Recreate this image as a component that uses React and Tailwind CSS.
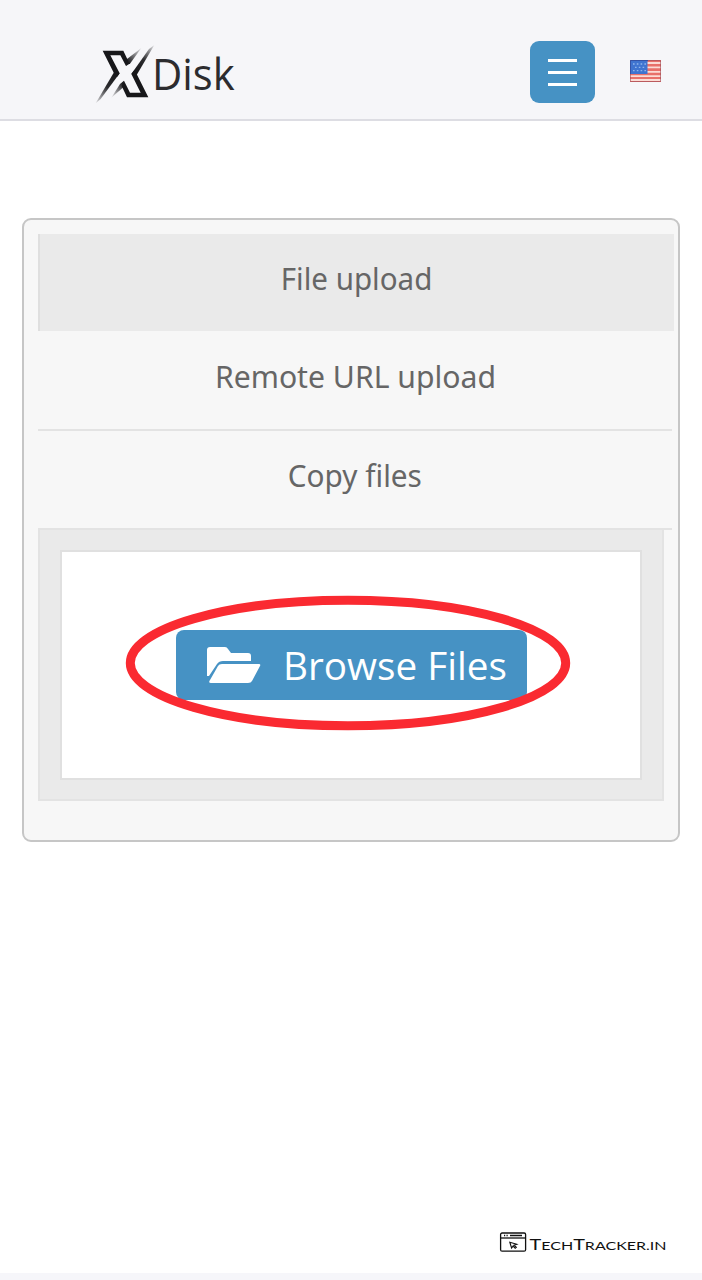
import React from "react";

function XDiskLogo() {
  return (
    <svg className="block h-[64px] w-[144px]" viewBox="45 39 432 192" role="img" aria-label="XDisk">
      <defs>
        <linearGradient id="fadeUp" gradientUnits="userSpaceOnUse" x1="165" y1="125" x2="222" y2="46">
          <stop offset="0" stopColor="#17171a" />
          <stop offset="0.45" stopColor="#2b2b2e" />
          <stop offset="1" stopColor="#17171a" stopOpacity="0.1" />
        </linearGradient>
        <linearGradient id="fadeDown" gradientUnits="userSpaceOnUse" x1="108" y1="130" x2="48" y2="220">
          <stop offset="0" stopColor="#17171a" />
          <stop offset="0.45" stopColor="#2b2b2e" />
          <stop offset="1" stopColor="#17171a" stopOpacity="0.1" />
        </linearGradient>
        <linearGradient id="shortUp" gradientUnits="userSpaceOnUse" x1="142" y1="96" x2="182" y2="54">
          <stop offset="0" stopColor="#17171a" />
          <stop offset="1" stopColor="#17171a" stopOpacity="0.1" />
        </linearGradient>
        <linearGradient id="shortDown" gradientUnits="userSpaceOnUse" x1="130" y1="160" x2="96" y2="200">
          <stop offset="0" stopColor="#17171a" />
          <stop offset="1" stopColor="#17171a" stopOpacity="0.1" />
        </linearGradient>
      </defs>
      <path d="M68 62H130L145 94L138 108L121 76H91L119 130L112 140L102 130Z" fill="#17171a" />
      <path d="M138 108L140 88L184 54L151 100Z" fill="url(#shortUp)" />
      <path d="M119 130L102 127L47 220L62 207Z" fill="url(#fadeDown)" />
      <path d="M205 202H141L125 168L132 152L150 188H182L154 132L161 122L170 132Z" fill="#17171a" />
      <path d="M132 152L130 172L94 203L120 162Z" fill="url(#shortDown)" />
      <path d="M154 132L170 135L223 45L207 57Z" fill="url(#fadeUp)" />
      <text x="216" y="181" textLength="248" lengthAdjust="spacingAndGlyphs" fontSize="131" fill="#2c2c2f" className="font-['Open_Sans','Noto_Sans',sans-serif]">Disk</text>
    </svg>
  );
}

function UsFlag() {
  return (
    <svg className="block h-[22px] w-[31px]" viewBox="0 0 31 22">
      <rect width="31" height="22" fill="#e8716a" />
      <path d="M0 3H31M0 7.4H31M0 11.8H31M0 16.2H31M0 20H31" stroke="#fbdcd5" strokeWidth="1.8" />
      <rect width="17.5" height="14" fill="#3f74d0" />
      <path d="M3 4H16M5 7.3H16M3 10.6H16" stroke="#8fb4ea" strokeWidth="1.3" strokeDasharray="1.6 2.2" />
      <path d="M.5 .5H30.5V21.5H.5Z" fill="none" stroke="#9c4b56" strokeOpacity=".6" />
      <path d="M.5 14V.5H18" fill="none" stroke="#3553a5" />
    </svg>
  );
}

function FolderIcon() {
  return (
    <svg className="block h-[38px] w-[55px]" viewBox="0 0 55 38" fill="#fff">
      <path d="M1 30V4Q1 1 4 1H19Q21 1 22 3L25 7H42Q45 7 45 10V15H17Q13 15 11 18L3 30Z" />
      <path d="M16 18H53Q55 18 54 20L46 35Q45 37 42 37H5Q2 37 4 34L12 20Q13 18 16 18Z" />
    </svg>
  );
}

function Watermark() {
  return (
    <svg className="block h-[24px] w-[170px]" viewBox="0 0 170 24" role="img" aria-label="TechTracker.in">
      <g fill="none" stroke="#111" strokeWidth="1.3">
        <rect x="1.6" y="3" width="25" height="18.2" rx="1.5" />
        <path d="M1.6 8H26.6" />
        <path d="M5 5.5H6.2M7.5 5.5H8.7M11 5.5H23" />
        <path d="M10.8 12.2L17.8 14.3L15 15.2L17.3 17.3L16.2 18.2L14 16.1L12.6 18Z" strokeWidth="1.1" />
      </g>
      <text x="30.5" y="19.5" textLength="137" lengthAdjust="spacingAndGlyphs" fill="#111" fontSize="11.6" className="font-[Lato,sans-serif]">
        <tspan fontSize="14.4">T</tspan>ECH<tspan fontSize="14.4">T</tspan>RACKER.IN
      </text>
    </svg>
  );
}

export default function App() {
  return (
    <div className="flex h-[1280px] w-[702px] flex-col overflow-hidden bg-white font-['Noto_Sans',sans-serif]">
      <header className="flex h-[121px] shrink-0 items-start border-b-2 border-[#dddde3] bg-[#f6f6f9] pl-[95px]">
        <div className="mt-[43px]"><XDiskLogo /></div>
        <button className="mt-[41px] ml-[291px] flex h-[62px] w-[65px] flex-col items-center justify-center gap-[9px] rounded-[9px] bg-[#4692c4]" aria-label="Menu">
          <span className="h-[3px] w-[29px] bg-white" />
          <span className="h-[3px] w-[29px] bg-white" />
          <span className="h-[3px] w-[29px] bg-white" />
        </button>
        <div className="mt-[60px] ml-[35px]"><UsFlag /></div>
      </header>

      <main className="flex-1 pt-[97px] pl-[22px]">
        <section className="h-[624px] w-[658px] rounded-[9px] border-2 border-[#c6c6c6] bg-[#f7f7f7] pt-[14px] pl-[14px]">
          <nav className="text-center text-[31px] leading-[40px] text-[#666]">
            <div className="flex h-[97px] w-[636px] justify-center border-l-2 border-[#dfdfdf] bg-[#eaeaea] pt-[24px]">
              <span className="scale-x-[0.953]">File upload</span>
            </div>
            <div className="flex h-[100px] w-[634px] justify-center border-b-2 border-[#e3e3e3] pt-[25px]">
              <span className="scale-x-[0.973]">Remote URL upload</span>
            </div>
            <div className="flex h-[99px] w-[634px] justify-center border-b-2 border-[#e3e3e3] pt-[24px]">
              <span className="scale-x-[0.96]">Copy files</span>
            </div>
          </nav>
          <div className="h-[271px] w-[626px] border-x-2 border-b-2 border-[#e3e3e3] bg-[#eaeaea] pt-[20px] pl-[20px]">
            <div className="relative flex h-[230px] w-[582px] justify-center border-2 border-[#e0e0e0] bg-white pt-[78px]">
              <button className="flex h-[70px] w-[351px] items-center rounded-[8px] bg-[#4692c4] pl-[30px] text-[39px] leading-[54px] text-white">
                <FolderIcon />
                <span className="ml-[22px] origin-left scale-x-[0.992] whitespace-nowrap font-['Open_Sans','Noto_Sans',sans-serif]">Browse Files</span>
              </button>
              <svg className="absolute top-[43px] left-[63px] h-[138px] w-[448px]" viewBox="0 0 448 138" fill="none">
                <ellipse cx="223" cy="68" rx="217.7" ry="62.8" stroke="#fa2a31" strokeWidth="9" />
              </svg>
            </div>
          </div>
        </section>
      </main>

      <div className="flex h-[43px] shrink-0 justify-end pr-[33px]"><Watermark /></div>
      <footer className="h-[7px] shrink-0 bg-[#f6f6fa]" />
    </div>
  );
}
